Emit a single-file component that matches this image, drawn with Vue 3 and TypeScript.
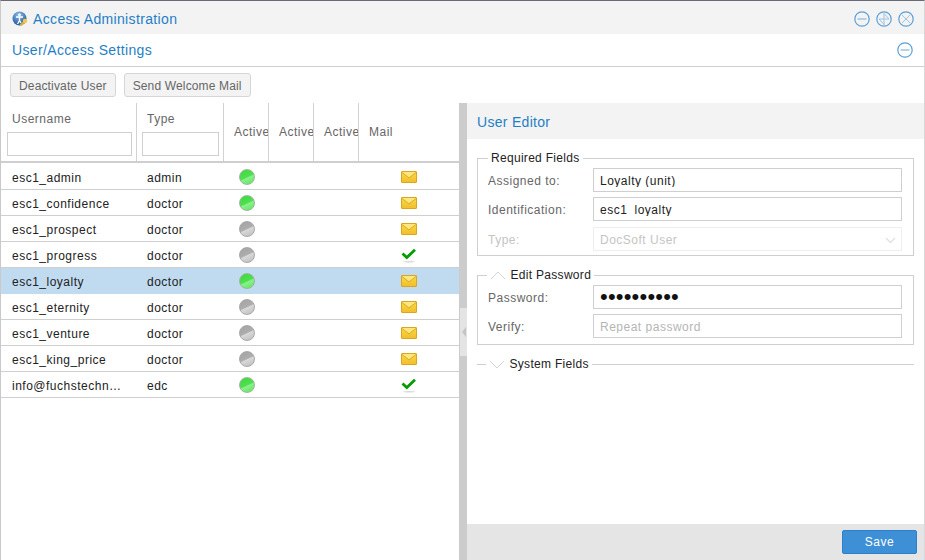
<script setup lang="ts">
interface UserRow { name: string; type: string; active: boolean; mail: 'env' | 'check'; selected?: boolean }
const rows: UserRow[] = [
  { name: 'esc1_admin', type: 'admin', active: true, mail: 'env' },
  { name: 'esc1_confidence', type: 'doctor', active: true, mail: 'env' },
  { name: 'esc1_prospect', type: 'doctor', active: false, mail: 'env' },
  { name: 'esc1_progress', type: 'doctor', active: false, mail: 'check' },
  { name: 'esc1_loyalty', type: 'doctor', active: true, mail: 'env', selected: true },
  { name: 'esc1_eternity', type: 'doctor', active: false, mail: 'env' },
  { name: 'esc1_venture', type: 'doctor', active: false, mail: 'env' },
  { name: 'esc1_king_price', type: 'doctor', active: false, mail: 'env' },
  { name: 'info@fuchstechn…', type: 'edc', active: true, mail: 'check' },
]
</script>

<template>
  <div class="window">
    <header class="titlebar">
      <svg class="app-icon" width="16" height="16" viewBox="0 0 16 16">
        <defs>
          <radialGradient id="globe" cx="0.45" cy="0.25" r="0.85">
            <stop offset="0" stop-color="#8fbfe6" />
            <stop offset="0.6" stop-color="#3f78b4" />
            <stop offset="1" stop-color="#28517f" />
          </radialGradient>
          <linearGradient id="env" x1="0" y1="0" x2="0" y2="1">
            <stop offset="0" stop-color="#fadb45" />
            <stop offset="1" stop-color="#f2bd2c" />
          </linearGradient>
        </defs>
        <circle cx="7.500" cy="7.500" r="7" fill="url(#globe)" />
        <circle cx="7.500" cy="3.800" r="1.400" fill="#fff" />
        <path d="M4 6h7M7.500 6v3.500M7.500 9.500L5.500 13M7.500 9.500L9 12" stroke="#fff" stroke-width="1.300" fill="none" />
        <path d="M8.500 14.500L13 10" stroke="#e3b23a" stroke-width="2" />
        <circle cx="13" cy="10" r="2.200" fill="#f3c846" />
      </svg>
      <h1 class="title">Access Administration</h1>
      <div class="win-buttons">
        <svg class="circle-btn" viewBox="0 0 16 16"><circle cx="8" cy="8" r="7.200" /><path class="soft" d="M3.500 8h9" /></svg>
        <svg class="circle-btn" viewBox="0 0 16 16"><circle cx="8" cy="8" r="7.200" /><path class="soft thin" d="M8 1v14M8 2.500L13 8H3L8 13.500" /></svg>
        <svg class="circle-btn" viewBox="0 0 16 16"><circle cx="8" cy="8" r="7.200" /><path class="soft thin" d="M4 4l8 8M12 4l-8 8" /></svg>
      </div>
    </header>

    <div class="section-head">
      <h2 class="section-title">User/Access Settings</h2>
      <svg class="circle-btn" viewBox="0 0 16 16"><circle cx="8" cy="8" r="7.200" /><path class="soft" d="M3.500 8h9" /></svg>
    </div>

    <div class="toolbar">
      <button class="tool-btn">Deactivate User</button>
      <button class="tool-btn">Send Welcome Mail</button>
    </div>

    <div class="main">
      <section class="grid-pane">
        <div class="grid-head">
          <div class="hcell filter-cell">
            <span class="hlabel">Username</span>
            <input class="filter" />
          </div>
          <div class="hcell filter-cell type-cell">
            <span class="hlabel">Type</span>
            <input class="filter" />
          </div>
          <div class="hcell plain">Active</div>
          <div class="hcell plain">Active</div>
          <div class="hcell plain">Active</div>
          <div class="hcell plain last">Mail</div>
        </div>
        <div v-for="row in rows" :key="row.name" class="row" :class="{ selected: row.selected }">
          <div class="cell name">{{ row.name }}</div>
          <div class="cell type">{{ row.type }}</div>
          <div class="cell dot-cell"><span class="dot" :class="row.active ? 'on' : 'off'"></span></div>
          <div class="cell"></div>
          <div class="cell"></div>
          <div class="cell mail">
            <svg v-if="row.mail === 'env'" width="16" height="12" viewBox="0 0 16 12">
              <rect x="0.500" y="0.500" width="15" height="11" rx="0.500" fill="url(#env)" stroke="#dba61e" />
              <path d="M1 1h14L8 6.300z" fill="#fbe67f" />
              <path d="M1 1.500L8 7l7-5.500" fill="none" stroke="#dcae2c" />
            </svg>
            <svg v-else width="16" height="16" viewBox="0 0 16 16">
              <ellipse cx="8" cy="14.800" rx="6" ry="0.700" fill="#d9d9d9" />
              <path d="M1.500 6.500L5.800 10.500L14 2.800" fill="none" stroke="#049c04" stroke-width="2.800" />
            </svg>
          </div>
        </div>
      </section>

      <div class="splitter">
        <div class="grip">
          <svg width="6" height="12" viewBox="0 0 6 12"><path d="M5 1L1 6l4 5z" fill="#c4c4c4" /></svg>
        </div>
      </div>

      <section class="editor">
        <div class="editor-head">User Editor</div>
        <div class="editor-body">
          <fieldset class="group req">
            <legend class="legend plain-legend">Required Fields</legend>
            <label class="field">
              <span class="flabel">Assigned to:</span>
              <span class="box"><input class="finput" value="Loyalty (unit)" /></span>
            </label>
            <label class="field">
              <span class="flabel">Identification:</span>
              <span class="box"><input class="finput" value="esc1_loyalty" /></span>
            </label>
            <label class="field disabled">
              <span class="flabel">Type:</span>
              <span class="box">
                <input class="finput" value="DocSoft User" disabled />
                <svg class="caret" width="11" height="7" viewBox="0 0 11 7"><path d="M1 1l4.500 4.500L10 1" fill="none" stroke="#e0e0e0" stroke-width="1.300" /></svg>
              </span>
            </label>
          </fieldset>

          <fieldset class="group pw">
            <legend class="legend">
              <svg class="chev" width="16" height="9" viewBox="0 0 16 9"><path d="M1 8l7-7 7 7" fill="none" stroke="#d4d4d4" /></svg>
              Edit Password
            </legend>
            <label class="field">
              <span class="flabel">Password:</span>
              <span class="box"><input class="finput dots" type="password" value="1234567890" /></span>
            </label>
            <label class="field">
              <span class="flabel">Verify:</span>
              <span class="box"><input class="finput" placeholder="Repeat password" /></span>
            </label>
          </fieldset>

          <fieldset class="group collapsed">
            <legend class="legend">
              <svg class="chev" width="16" height="9" viewBox="0 0 16 9"><path d="M1 1l7 7 7-7" fill="none" stroke="#d4d4d4" /></svg>
              System Fields
            </legend>
          </fieldset>
        </div>
        <footer class="editor-foot">
          <button class="save">Save</button>
        </footer>
      </section>
    </div>
  </div>
</template>

<style>
html, body { margin: 0; padding: 0; background: #fff; }
</style>

<style scoped>
.window {
  width: 925px;
  height: 560px;
  box-sizing: border-box;
  display: flex;
  flex-direction: column;
  overflow: hidden;
  border-top: 1px solid #6a6a74;
  border-left: 1px solid #c9c9c9;
  border-right: 1px solid #d8d8d8;
  font-family: "Liberation Sans", Arial, sans-serif;
  font-size: 12px;
  letter-spacing: 0.5px;
  color: #333;
  background: #fff;
}
.titlebar {
  height: 33px;
  flex: none;
  box-sizing: border-box;
  display: flex;
  align-items: center;
  padding: 2px 10px 0 11px;
  background: #f3f3f3;
}
.app-icon { margin-right: 5px; }
.title, .section-title {
  margin: 0;
  font-weight: 400;
  font-size: 14px;
  color: #1f7fc6;
  letter-spacing: 0.35px;
}
.win-buttons { margin-left: auto; display: flex; gap: 6px; }
.circle-btn { width: 16px; height: 16px; fill: none; stroke: #5b9fd6; stroke-width: 1.200; display: block; }
.circle-btn .soft { stroke: #9fc4e4; stroke-width: 1.500; }
.circle-btn .soft.thin { stroke-width: 1; }
.section-head {
  height: 33px;
  flex: none;
  box-sizing: border-box;
  display: flex;
  align-items: center;
  justify-content: space-between;
  padding: 0 11px;
  border-bottom: 1px solid #cfcfcf;
}
.toolbar {
  height: 36px;
  flex: none;
  display: flex;
  align-items: center;
  gap: 8px;
  padding: 0 0 0 9px;
}
.tool-btn {
  height: 24px;
  box-sizing: border-box;
  padding: 1px 8px 0;
  border: 1px solid #d6d6d6;
  border-radius: 3px;
  background: #f3f3f3;
  font: inherit;
  letter-spacing: 0.15px;
  color: #666;
}
.main { flex: 1; min-height: 0; display: flex; }
.grid-pane { width: 458px; flex: none; }
.grid-head {
  height: 58px;
  display: grid;
  grid-template-columns: 136px 87px 45px 45px 45px 1fr;
  border-bottom: 2px solid #cfcfcf;
  margin-bottom: 1px;
}
.hcell {
  border-right: 1px solid #d2d2d2;
  box-sizing: border-box;
  color: #666;
  overflow: hidden;
}
.hcell.last { border-right: none; }
.hcell.plain { display: flex; align-items: center; padding: 0 0 0 10px; white-space: nowrap; }
.filter-cell { display: flex; flex-direction: column; padding: 8px 4px 0 6px; }
.type-cell { padding-left: 5px; }
.hlabel { height: 21px; line-height: 16px; padding-left: 5px; }
.filter {
  width: 100%;
  height: 24px;
  box-sizing: border-box;
  border: 1px solid #cfcfcf;
  background: #fff;
  padding: 0;
  outline: none;
}
.row {
  height: 26px;
  box-sizing: border-box;
  display: grid;
  grid-template-columns: 136px 87px 45px 45px 45px 1fr;
  border-bottom: 1px solid #cfcfcf;
  align-items: center;
  color: #222;
}
.row.selected { background: #c0dbf0; border-bottom-color: #c0dbf0; }
.cell { min-width: 0; white-space: nowrap; overflow: hidden; }
.name { padding: 2px 0 0 11px; }
.type { padding: 2px 0 0 10px; }
.dot-cell { display: flex; justify-content: center; }
.dot {
  width: 16px;
  height: 16px;
  box-sizing: border-box;
  border-radius: 50%;
  display: block;
}
.dot.on {
  border: 1px solid #9db69d;
  background: linear-gradient(155deg, #3cd83c 0%, #4fe04f 50%, #8cf08c 56%, #58e858 100%);
}
.dot.off {
  border: 1px solid #a8a8a8;
  background: linear-gradient(155deg, #a3a3a3 0%, #adadad 48%, #d8d8d8 54%, #bdbdbd 100%);
}
.mail { display: flex; justify-content: center; height: 16px; align-items: center; }
.splitter { width: 8px; flex: none; background: #cccccc; position: relative; }
.grip {
  position: absolute;
  left: 1px;
  top: 205px;
  width: 7px;
  height: 48px;
  background: #e4e4e4;
  display: flex;
  align-items: center;
  justify-content: center;
}
.editor { flex: 1; min-width: 0; display: flex; flex-direction: column; }
.editor-head {
  height: 36px;
  flex: none;
  display: flex;
  align-items: center;
  padding: 1px 0 0 10px;
  box-sizing: border-box;
  background: #f3f3f3;
  color: #1f7fc6;
  font-size: 14px;
  letter-spacing: 0.3px;
}
.editor-body { flex: 1; padding: 12px 10px 0 10px; display: flex; flex-direction: column; }
.group {
  margin: 0 0 12px 0;
  padding: 0 10px;
  border: 1px solid #cfcfcf;
  min-width: 0;
}
.group.req { padding-bottom: 4px; }
.group.pw { padding-bottom: 6px; }
.legend {
  padding: 0 3px;
  margin-left: -1px;
  color: #222;
  height: 14px;
  line-height: 14px;
  display: flex;
  align-items: center;
  gap: 4.500px;
  letter-spacing: 0.3px;
}
.plain-legend { margin-left: 0; }
.collapsed { border-width: 1px 0 0 0; margin-top: 0; }
.field { display: flex; align-items: center; height: 24px; margin-top: 5px; color: #666; }
.group .field:first-of-type { margin-top: 3px; }
.field.disabled { margin-top: 6px; color: #c4c4c4; }
.flabel { width: 105px; flex: none; padding-top: 2px; }
.box {
  position: relative;
  width: 309px;
  height: 24px;
  box-sizing: border-box;
  border: 1px solid #cfcfcf;
  padding: 6px 6px 0;
  background: #fff;
  overflow: hidden;
}
.finput {
  display: block;
  width: 100%;
  height: 12px;
  box-sizing: border-box;
  border: none;
  padding: 0;
  font: inherit;
  letter-spacing: 0.5px;
  color: #222;
  background: transparent;
  outline: none;
}
.finput::placeholder { color: #b5b5b5; opacity: 1; }
.finput.dots { height: 20px; margin-top: -5px; font-size: 22px; letter-spacing: 0.2px; color: #111; }
.disabled .box { border-color: #eeeeee; }
.disabled .finput { color: #c4c4c4; }
.caret { position: absolute; right: 5px; top: 9px; }
.editor-foot {
  height: 36px;
  flex: none;
  background: #e5e5e5;
  display: flex;
  align-items: center;
  justify-content: flex-end;
  padding-right: 7px;
}
.save {
  width: 75px;
  height: 24px;
  box-sizing: border-box;
  border: 1px solid #2a80cc;
  border-radius: 2px;
  background: #3d90d6;
  color: #fff;
  font: inherit;
  letter-spacing: inherit;
}
</style>
